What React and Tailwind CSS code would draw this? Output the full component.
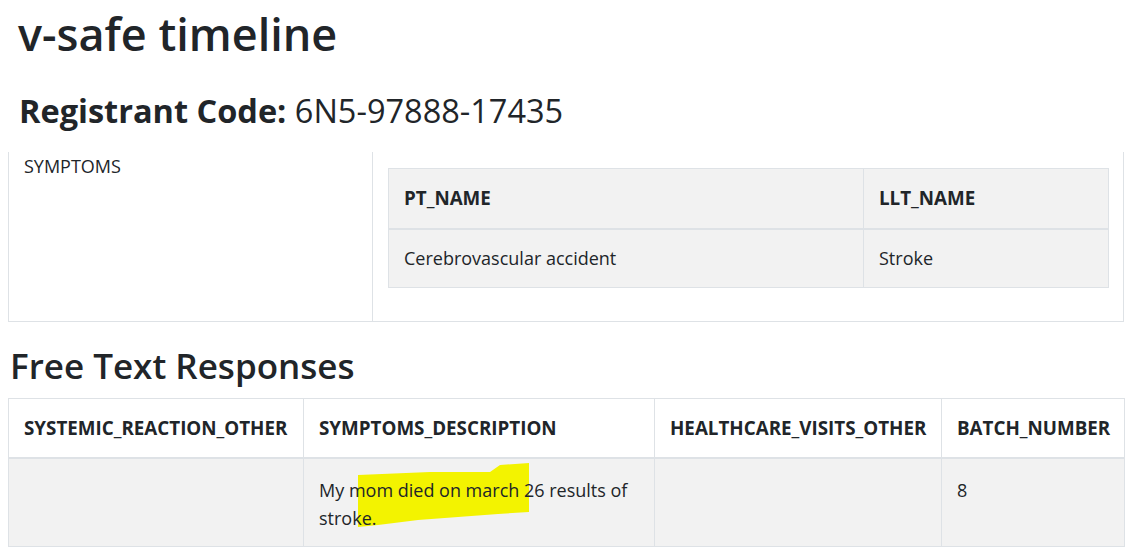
import React from 'react';

function App() {
  return (
    <div className="w-[1140px] h-[559px] overflow-hidden bg-white text-[#212529] font-['Open_Sans',sans-serif]">
      <div className="px-2">
        {/* Headings */}
        <h1 className="pl-[10px] pt-[3px] text-[45px] leading-[62px] font-semibold">v-safe timeline</h1>
        <h2 className="pl-[11px] mt-[24px] text-[32.5px] leading-[44px]">
          <span className="font-bold">Registrant Code:</span> 6N5-97888-17435
        </h2>

        {/* Symptoms block */}
        <div className="mt-[19px] w-[1116px] h-[170px] flex border-x border-b border-[#dee2e6]">
          <div className="w-[364px] shrink-0 border-r border-[#dee2e6] pl-[15px] pt-[1px] text-[18px] leading-[27px]">
            SYMPTOMS
          </div>
          <div className="flex-1 pl-[15px] pr-[15px] pt-[16px]">
            <table className="w-[720px] table-fixed border-collapse text-[18px] leading-[27px]">
              <colgroup>
                <col className="w-[475px]" />
                <col className="w-[245px]" />
              </colgroup>
              <thead>
                <tr className="bg-[#f2f2f2]">
                  <th className="h-[60px] border border-[#dee2e6] border-b-2 px-[15px] text-left text-[18.8px] font-bold">PT_NAME</th>
                  <th className="h-[60px] border border-[#dee2e6] border-b-2 px-[15px] text-left text-[18.8px] font-bold">LLT_NAME</th>
                </tr>
              </thead>
              <tbody>
                <tr className="bg-[#f2f2f2]">
                  <td className="h-[59px] border border-[#dee2e6] px-[15px]">Cerebrovascular accident</td>
                  <td className="h-[59px] border border-[#dee2e6] px-[15px]">Stroke</td>
                </tr>
              </tbody>
            </table>
          </div>
        </div>

        {/* Free text */}
        <h2 className="pl-[2px] mt-[20px] text-[35px] leading-[48px] font-semibold">Free Text Responses</h2>
        <table className="mt-[8px] w-[1116px] table-fixed border-collapse text-[18px] leading-[28px]">
          <colgroup>
            <col className="w-[295px]" />
            <col className="w-[351px]" />
            <col className="w-[287px]" />
            <col className="w-[183px]" />
          </colgroup>
          <thead>
            <tr>
              <th className="h-[59px] border border-[#dee2e6] border-b-2 px-[15px] text-left text-[18.8px] font-bold">SYSTEMIC_REACTION_OTHER</th>
              <th className="h-[59px] border border-[#dee2e6] border-b-2 px-[15px] text-left text-[18.8px] font-bold">SYMPTOMS_DESCRIPTION</th>
              <th className="h-[59px] border border-[#dee2e6] border-b-2 px-[15px] text-left text-[18.8px] font-bold">HEALTHCARE_VISITS_OTHER</th>
              <th className="h-[59px] border border-[#dee2e6] border-b-2 px-[15px] text-left text-[18.8px] font-bold">BATCH_NUMBER</th>
            </tr>
          </thead>
          <tbody>
            <tr className="bg-[#f2f2f2] align-top">
              <td className="h-[89px] border border-[#dee2e6] px-[15px] pt-[17px]"></td>
              <td className="h-[89px] border border-[#dee2e6] px-[15px] pt-[17px]">
                <div className="relative">
                  {/* marker highlight */}
                  <svg className="absolute left-[39px] top-[-14px]" width="172" height="66" viewBox="0 0 172 66">
                    <path d="M0 13 L72 10 L132 10 L142 3 L171 1 L171 50 L140 52 L60 58 L20 63 L0 65 Z" fill="#f3f300" />
                  </svg>
                  <span className="relative">My mom died on march 26 results of stroke.</span>
                </div>
              </td>
              <td className="h-[89px] border border-[#dee2e6] px-[15px] pt-[17px]"></td>
              <td className="h-[89px] border border-[#dee2e6] px-[15px] pt-[17px]">8</td>
            </tr>
          </tbody>
        </table>
      </div>
    </div>
  );
}

export default App;
